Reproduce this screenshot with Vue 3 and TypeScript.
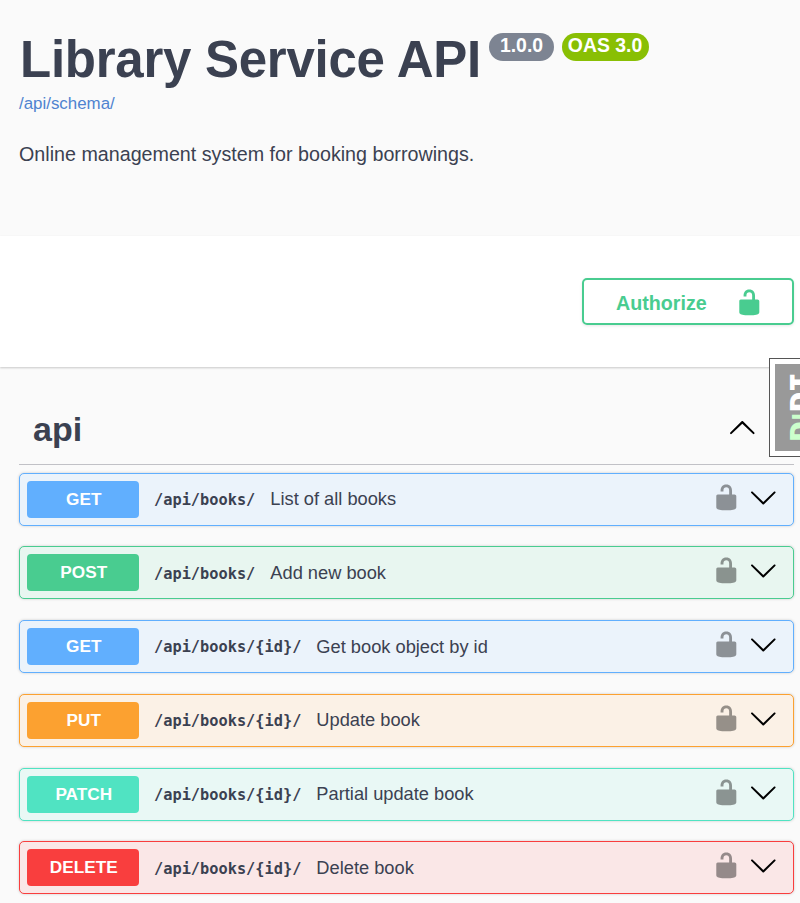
<script setup lang="ts">
interface Operation {
  method: string
  path: string
  summary: string
}

const operations: Operation[] = [
  { method: 'GET', path: '/api/books/', summary: 'List of all books' },
  { method: 'POST', path: '/api/books/', summary: 'Add new book' },
  { method: 'GET', path: '/api/books/{id}/', summary: 'Get book object by id' },
  { method: 'PUT', path: '/api/books/{id}/', summary: 'Update book' },
  { method: 'PATCH', path: '/api/books/{id}/', summary: 'Partial update book' },
  { method: 'DELETE', path: '/api/books/{id}/', summary: 'Delete book' },
]

const unlocked =
  'M15.8 8H14V5.6C14 2.703 12.665 1 10 1 7.334 1 6 2.703 6 5.6V6h2v-.801C8 3.754 8.797 3 10 3c1.203 0 2 .754 2 2.199V8H4c-.553 0-1 .646-1 1.199V17c0 .549.428 1.139.951 1.307l1.197.387C5.672 18.861 6.55 19 7.1 19h5.8c.549 0 1.428-.139 1.951-.307l1.196-.387c.524-.167.953-.757.953-1.306V9.199C17 8.646 16.352 8 15.8 8z'
const arrowDown =
  'M17.418 6.109c.272-.268.709-.268.979 0s.271.701 0 .969l-7.908 7.83c-.27.268-.707.268-.979 0l-7.908-7.83c-.27-.268-.27-.701 0-.969.271-.268.709-.268.979 0L10 13.25l7.418-7.141z'
</script>

<template>
  <div class="page">
    <header class="info">
      <div class="heading">
        <h1 class="title">Library Service API</h1>
        <span class="badge version">1.0.0</span>
        <span class="badge oas">OAS 3.0</span>
      </div>
      <a class="schema">/api/schema/</a>
      <p class="description">Online management system for booking borrowings.</p>
    </header>

    <section class="auth-bar">
      <button class="authorize">
        <span>Authorize</span>
        <svg class="icon" viewBox="0 0 20 20"><path :d="unlocked" /></svg>
      </button>
    </section>

    <main class="operations">
      <div class="tag">
        <h2 class="tag-name">api</h2>
        <svg class="icon up" viewBox="0 0 20 20"><path :d="arrowDown" /></svg>
      </div>
      <div class="list">
        <div v-for="(op, i) in operations" :key="i" class="row" :class="op.method.toLowerCase()">
          <span class="method">{{ op.method }}</span>
          <span class="path">{{ op.path }}</span>
          <span class="summary">{{ op.summary }}</span>
          <svg class="icon lock" viewBox="0 0 20 20"><path :d="unlocked" /></svg>
          <svg class="icon arrow" viewBox="0 0 20 20"><path :d="arrowDown" /></svg>
        </div>
      </div>
    </main>

    <div class="debug-handle">
      <div class="debug-inner">
        <span class="debug-text"><span class="dj">D<span class="small">J</span></span>DT</span>
      </div>
    </div>
  </div>
</template>

<style>
body {
  margin: 0;
  background: #fafafa;
}
</style>

<style scoped>
.page {
  position: relative;
  width: 800px;
  height: 903px;
  overflow: hidden;
  background: #fafafa;
  color: #3b4151;
  font-family: 'Liberation Sans', Arial, sans-serif;
}

.info {
  box-sizing: border-box;
  height: 236px;
  padding: 30px 19px 0;
}

.heading {
  display: flex;
  align-items: flex-start;
  height: 63px;
}

.title {
  box-sizing: border-box;
  margin: 0;
  padding-left: 1px;
  font-size: 51px;
  line-height: 60px;
  font-weight: 700;
  letter-spacing: -0.26px;
  white-space: nowrap;
  width: 470px;
}

.badge {
  box-sizing: border-box;
  height: 28px;
  margin-top: 2.5px;
  border-radius: 14px;
  color: #fff;
  font-size: 19.4px;
  line-height: 25px;
  font-weight: 700;
  text-align: center;
  white-space: nowrap;
}

.version {
  width: 65px;
  background: #7d8492;
}

.oas {
  width: 87px;
  margin-left: 8px;
  padding-right: 1px;
  background: #89bf04;
}

.schema {
  display: block;
  color: #4f83d0;
  font-size: 16.9px;
  line-height: 22px;
}

.description {
  margin: 27px 0 0;
  font-size: 19.7px;
  line-height: 24px;
}

.auth-bar {
  position: relative;
  box-sizing: border-box;
  display: flex;
  justify-content: flex-end;
  height: 131px;
  padding: 42px 6px 0 0;
  background: #fff;
  box-shadow: 0 1px 2px rgba(0, 0, 0, 0.2);
}

.authorize {
  box-sizing: border-box;
  display: flex;
  align-items: center;
  justify-content: space-between;
  width: 212px;
  height: 47px;
  padding: 2px 28px 0 32px;
  border: 2px solid #49cc90;
  border-radius: 5px;
  background: transparent;
  box-shadow: 0 1px 3px rgba(0, 0, 0, 0.1);
  color: #49cc90;
  font: 700 19.7px 'Liberation Sans', Arial, sans-serif;
}

.authorize span {
  padding-top: 1px;
}

.icon {
  display: block;
  flex: none;
  width: 28.6px;
  height: 28.6px;
  fill: currentColor;
}

.operations {
  padding: 26px 6px 0 19px;
}

.tag {
  box-sizing: border-box;
  display: flex;
  align-items: center;
  justify-content: space-between;
  height: 72px;
  padding: 0 37px 0 14px;
  border-bottom: 1px solid #c1c1c6;
}

.tag-name {
  margin: 0;
  font-size: 34px;
  line-height: 40px;
  font-weight: 700;
}

.up {
  color: #000;
  transform: rotate(180deg);
}

.list {
  display: flex;
  flex-direction: column;
  gap: 20.75px;
  padding-top: 7.5px;
}

.row {
  box-sizing: border-box;
  display: flex;
  align-items: center;
  height: 53px;
  padding: 0 15px 0 6.5px;
  border: 1px solid;
  border-radius: 5px;
  box-shadow: 0 0 3px rgba(0, 0, 0, 0.19);
}

.method {
  box-sizing: border-box;
  width: 112.5px;
  height: 37px;
  padding-left: 2px;
  border-radius: 4px;
  color: #fff;
  font-size: 17.2px;
  line-height: 37px;
  font-weight: 700;
  text-align: center;
}

.path {
  margin: 1.5px 0 0 15px;
  font-family: 'DejaVu Sans Mono', monospace;
  font-size: 15.3px;
  font-weight: 700;
}

.summary {
  flex: 1;
  margin-left: 15px;
  font-size: 18.25px;
}

.lock {
  margin-bottom: 4px;
  color: #000;
  opacity: 0.4;
}

.arrow {
  margin: 0 0 4px 8.4px;
  color: #000;
}

.get {
  border-color: #61affe;
  background: #ebf3fb;
}
.get .method {
  background: #61affe;
}
.post {
  border-color: #49cc90;
  background: #e8f6f0;
}
.post .method {
  background: #49cc90;
}
.put {
  border-color: #fca130;
  background: #fbf1e6;
}
.put .method {
  background: #fca130;
}
.patch {
  border-color: #50e3c2;
  background: #e9f8f5;
}
.patch .method {
  background: #50e3c2;
}
.delete {
  border-color: #f93e3e;
  background: #fae7e7;
}
.delete .method {
  background: #f93e3e;
}

.debug-handle {
  position: absolute;
  left: 769px;
  top: 358px;
  box-sizing: border-box;
  width: 56px;
  height: 99px;
  padding: 5px;
  border: 1px solid #555;
  background: #fff;
}

.debug-inner {
  height: 87px;
  background: #999;
}

.debug-text {
  display: block;
  box-sizing: border-box;
  height: 87px;
  padding-top: 8.5px;
  writing-mode: vertical-rl;
  transform: rotate(180deg);
  color: #fff;
  font: 800 28.5px/49px 'Open Sans', sans-serif;
  letter-spacing: 0.8px;
  white-space: nowrap;
}

.dj {
  color: #cfc;
}

.small {
  font-size: 20px;
  line-height: 1;
}
</style>
